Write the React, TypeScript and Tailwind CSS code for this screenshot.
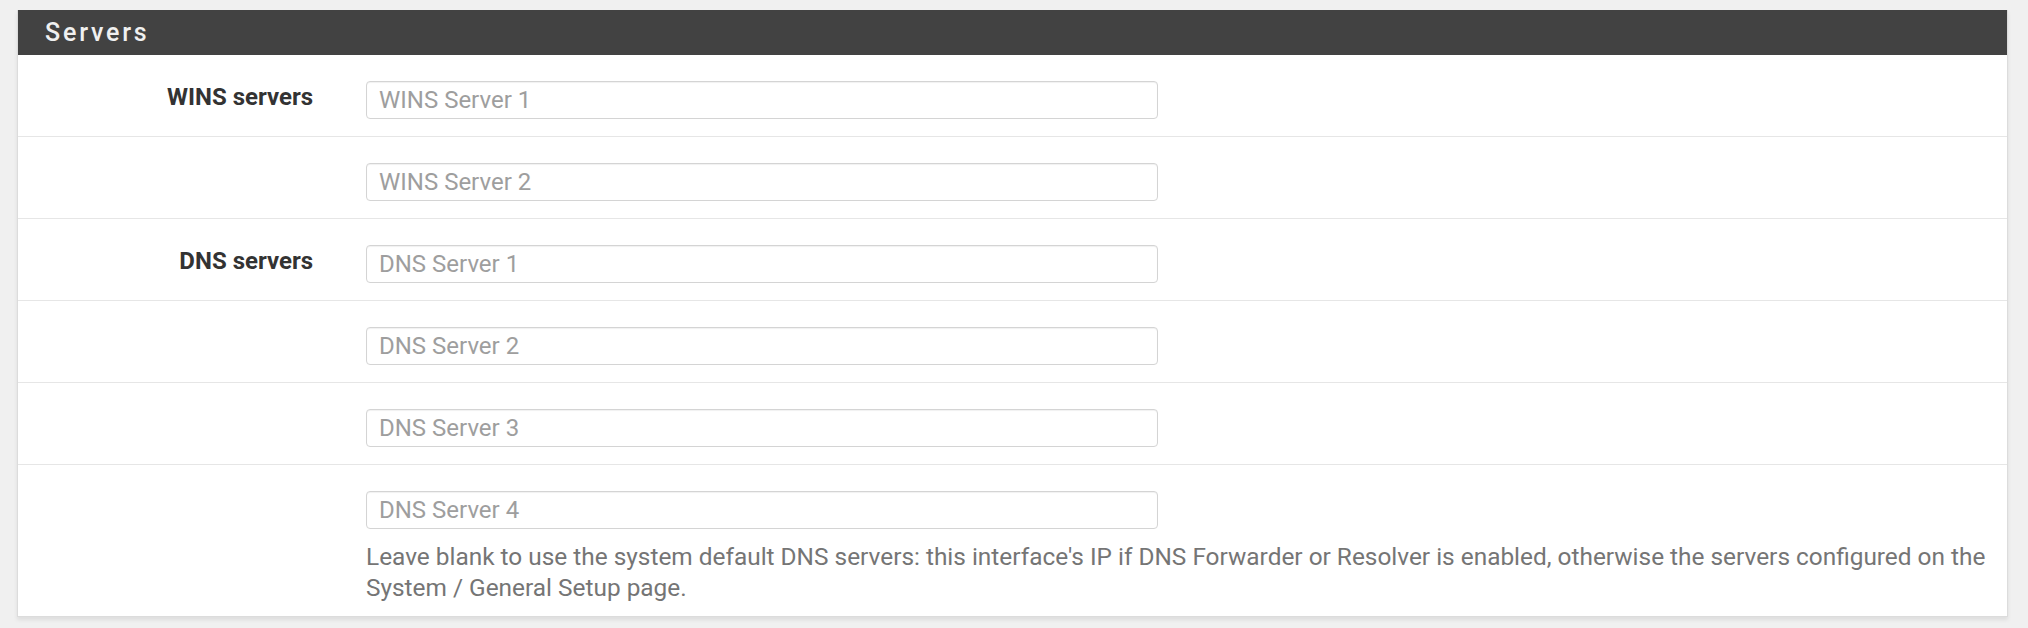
import React from "react";

interface Field {
  label?: string;
  placeholder: string;
  help?: string;
}

const fields: Field[] = [
  { label: "WINS servers", placeholder: "WINS Server 1" },
  { placeholder: "WINS Server 2" },
  { label: "DNS servers", placeholder: "DNS Server 1" },
  { placeholder: "DNS Server 2" },
  { placeholder: "DNS Server 3" },
  {
    placeholder: "DNS Server 4",
    help: "Leave blank to use the system default DNS servers: this interface's IP if DNS Forwarder or Resolver is enabled, otherwise the servers configured on the System / General Setup page.",
  },
];

const FormRow: React.FC<{ field: Field; last: boolean }> = ({ field, last }) => {
  return (
    <div
      className={
        last
          ? "flex pt-[26px] pb-[13px]"
          : "flex pt-[26px] pb-[17px] border-b border-[#e6e6e6]"
      }
    >
      <div className="w-[332px] shrink-0 pr-[37px] pt-[2px] text-right text-[24px] leading-[28px] font-bold text-[#333333]">
        {field.label}
      </div>
      <div className="flex-1 pl-[16px]">
        <input
          type="text"
          placeholder={field.placeholder}
          className="block w-[792px] h-[38px] px-[12px] rounded-[4px] border border-[#d4d4d4] bg-white text-[24px] text-[#555] placeholder:text-[#9e9e9e] shadow-[inset_0_1px_1px_rgba(0,0,0,0.06)] outline-none"
        />
        {field.help && (
          <p className="mt-[12px] text-[24.4px] leading-[31px] text-[#757575]">
            {field.help}
          </p>
        )}
      </div>
    </div>
  );
};

export default function App() {
  return (
    <div className="min-h-screen bg-[#f0f0f0] pt-[10px] pl-[17px] pr-[20px] font-[Roboto,sans-serif]">
      <div className="bg-white border-x border-b border-[#dcdcdc] shadow-[0_3px_4px_rgba(0,0,0,0.08)]">
        <div className="h-[45px] bg-[#424242] flex items-center pl-[27px]">
          <h2 className="text-[25px] font-medium tracking-[2.8px] text-[#f0f0f0]">
            Servers
          </h2>
        </div>
        {fields.map((f, i) => (
          <FormRow key={f.placeholder} field={f} last={i === fields.length - 1} />
        ))}
      </div>
    </div>
  );
}
